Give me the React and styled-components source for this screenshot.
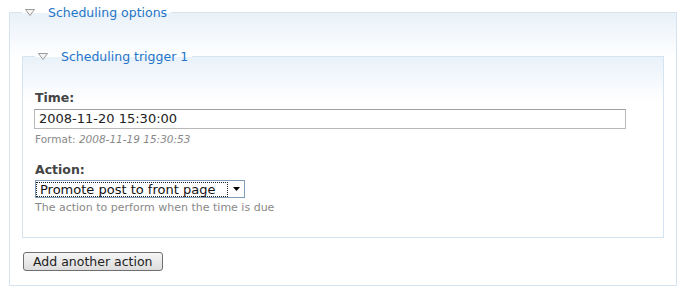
import React from "react";
import styled, { createGlobalStyle } from "styled-components";

const Global = createGlobalStyle`
  html, body { margin: 0; padding: 0; background: #fff; }
  body { font-family: "DejaVu Sans", Verdana, sans-serif; color: #494949; }
`;

const Page = styled.div`
  padding: 3px 13px 0 9px;
  width: 668px;
`;

const Fieldset = styled.fieldset`
  margin: ${(p) => (p.$inner ? "26px 0 0 0" : "0")};
  padding: 0 12px ${(p) => (p.$inner ? "23px" : "14px")} 12px;
  border: 1px solid #d6e4f1;
  background: linear-gradient(to bottom, #e9f1f9 0px, #ffffff 45px);
  min-width: 0;
`;

const Legend = styled.legend`
  padding: 0 4px 0 3px;
  margin: 0;
  display: flex;
  align-items: center;
  height: 18px;
  font-size: 12.5px;
  color: #1f75c8;
  background: transparent;
`;

const Toggle = styled.svg`
  width: 10px;
  height: 7px;
  margin-right: 13px;
  flex: none;
`;

const Field = styled.div`
  margin-top: ${(p) => p.$top || 0}px;
`;

const Label = styled.label`
  display: block;
  font-size: 12.5px;
  font-weight: bold;
  color: #444;
  line-height: 16px;
  margin-bottom: 2px;
`;

const TextInput = styled.input`
  box-sizing: border-box;
  width: 592px;
  height: 20px;
  margin-left: -1px;
  border: 1px solid #b8b8b8;
  border-top-color: #a0a0a0;
  padding: 0 4px;
  font-family: "DejaVu Sans", Verdana, sans-serif;
  font-size: 13px;
  color: #222;
  outline: none;
`;

const Description = styled.div`
  font-size: ${(p) => p.$size || 11}px;
  color: #898989;
  margin-top: 4px;
  line-height: 12px;
  em { font-style: italic; }
`;

const SelectBox = styled.div`
  box-sizing: border-box;
  width: 210px;
  height: 18px;
  border: 1px solid #7f9db9;
  display: flex;
  align-items: stretch;
  background: #fff;
`;

const SelectValue = styled.span`
  flex: 1;
  border: 1px dotted #222;
  margin: 1px 0 0 0;
  padding: 0 3px;
  font-size: 13px;
  line-height: 13px;
  color: #111;
  white-space: nowrap;
`;

const SelectArrow = styled.span`
  width: 16px;
  display: flex;
  align-items: center;
  justify-content: center;
`;

const Button = styled.button`
  margin-top: 14px;
  margin-left: 1px;
  box-sizing: border-box;
  height: 19px;
  padding: 0 9px;
  border: 1px solid #6f6f6f;
  border-radius: 3px;
  background: linear-gradient(to bottom, #f6f6f6, #dcdcdc);
  font-family: "DejaVu Sans", Verdana, sans-serif;
  font-size: 12.5px;
  line-height: 15px;
  color: #222;
`;

const Tri = () => (
  <Toggle viewBox="0 0 10 7">
    <polygon points="0.5,0.5 9.5,0.5 5,6.5" fill="#f4f4f4" stroke="#9a9a9a" strokeWidth="1" />
  </Toggle>
);

export default function App() {
  return (
    <Page>
      <Global />
      <Fieldset>
        <Legend>
          <Tri />
          Scheduling options
        </Legend>
        <Fieldset $inner>
          <Legend>
            <Tri />
            Scheduling trigger 1
          </Legend>
          <Field $top={25}>
            <Label>Time:</Label>
            <TextInput defaultValue="2008-11-20 15:30:00" />
            <Description $size={10.5}>
              Format: <em>2008-11-19 15:30:53</em>
            </Description>
          </Field>
          <Field $top={17}>
            <Label>Action:</Label>
            <SelectBox>
              <SelectValue>Promote post to front page</SelectValue>
              <SelectArrow>
                <svg width="7" height="4" viewBox="0 0 7 4">
                  <polygon points="0,0 7,0 3.5,4" fill="#000" />
                </svg>
              </SelectArrow>
            </SelectBox>
            <Description $size={11}>The action to perform when the time is due</Description>
          </Field>
        </Fieldset>
        <Button>Add another action</Button>
      </Fieldset>
    </Page>
  );
}
